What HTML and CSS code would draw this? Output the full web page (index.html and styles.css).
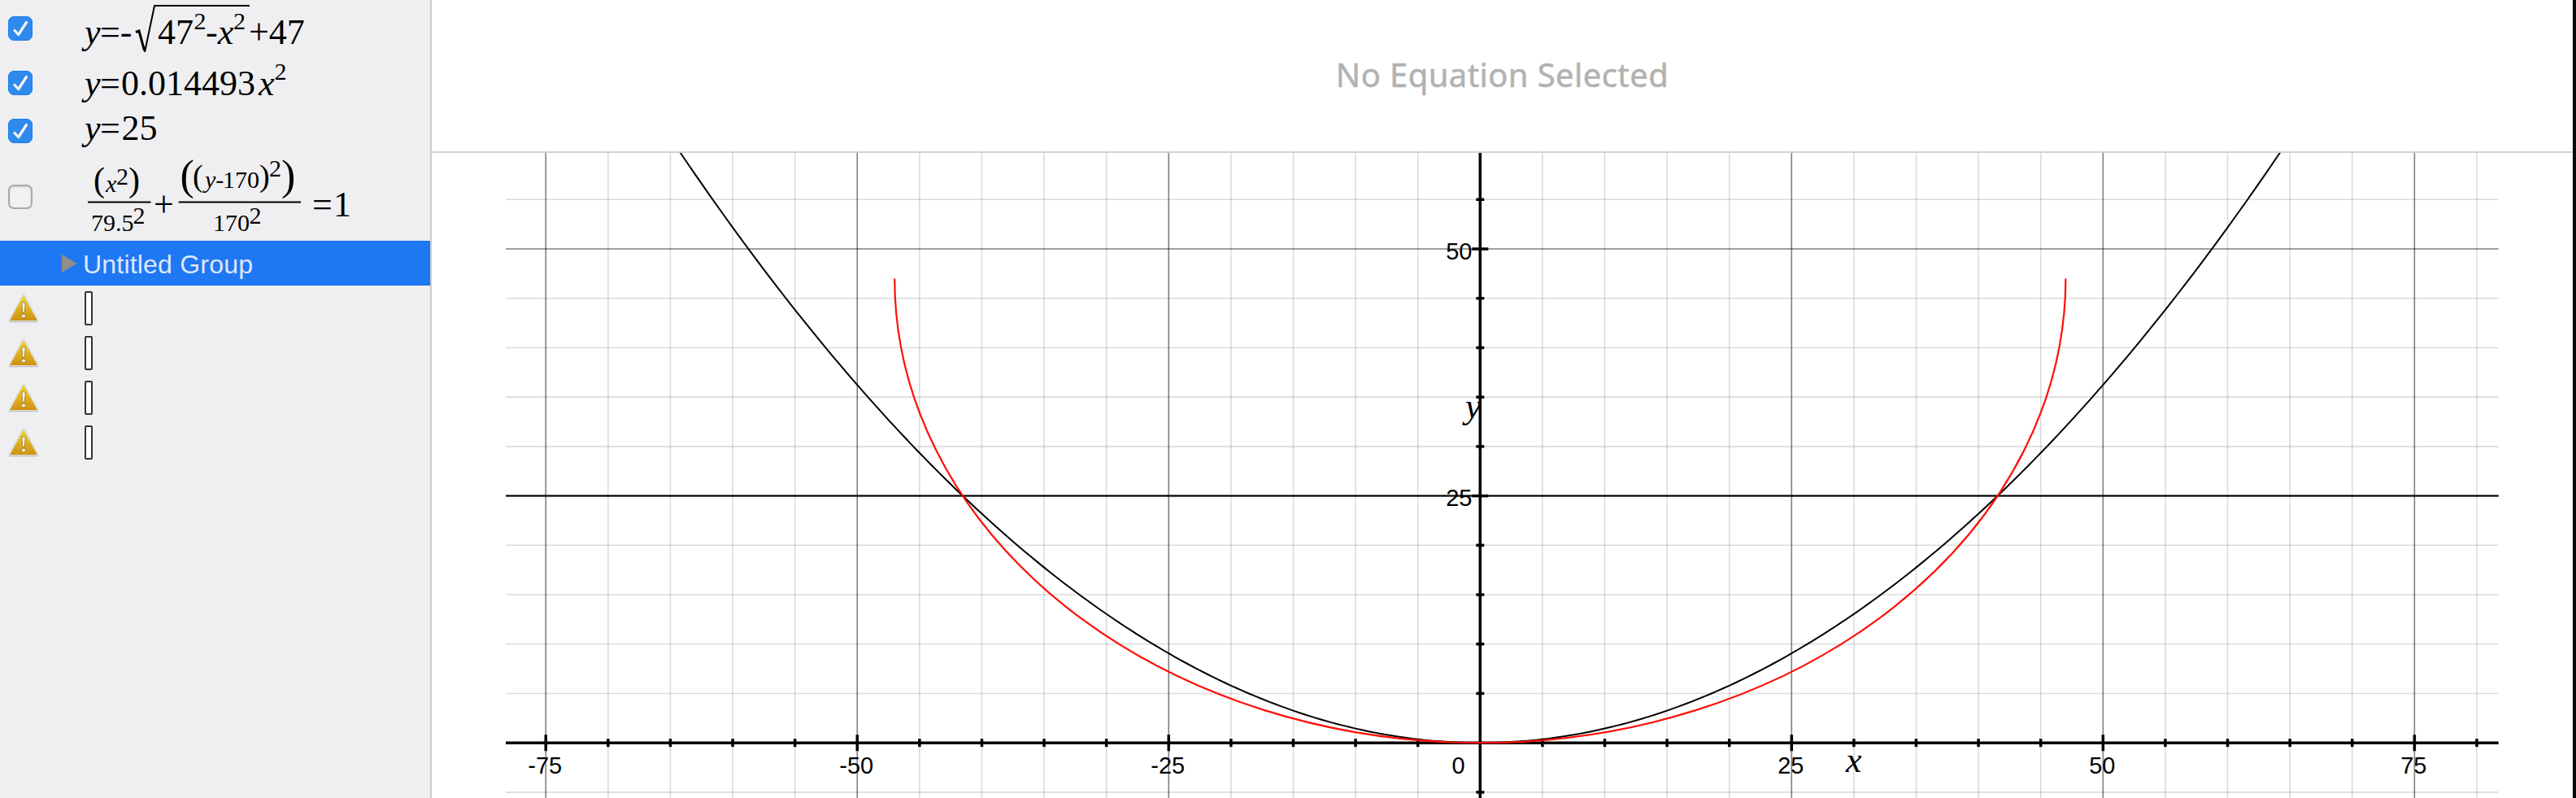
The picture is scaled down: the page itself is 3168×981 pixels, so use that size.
FILE: index.html
```html
<!DOCTYPE html>
<html lang="en">
<head>
  <meta charset="UTF-8" />
  <meta name="viewport" content="width=device-width, initial-scale=1.0"/>
  <title>Grapher</title>
  <link rel="stylesheet" href="styles.css">
</head>
<body>
  <!-- shared icons -->
  <svg class="defs" width="0" height="0">
    <defs>
      <linearGradient id="warnFill" x1="0" y1="0" x2="0" y2="1">
        <stop offset="0" stop-color="#f0d32e" />
        <stop offset="1" stop-color="#cf9312" />
      </linearGradient>
      <symbol id="tick" viewBox="0 0 30 30">
        <path d="M8 17.500 L12.700 22.500 L22.500 7.500" fill="none" stroke="#f4f4f4" stroke-width="3.200" stroke-linecap="round" stroke-linejoin="round" />
      </symbol>
      <symbol id="warning" viewBox="0 0 38 38">
        <path d="M19 3.500 L35.500 34.500 H2.500 Z" fill="#b9b9bb" stroke="#b9b9bb" stroke-width="3.500" stroke-linejoin="round" />
        <path d="M19 3 L35.500 33.500 H2.500 Z" fill="#dededf" stroke="#dededf" stroke-width="3.500" stroke-linejoin="round" />
        <path d="M19 4 L35 33.500 H3 Z" fill="url(#warnFill)" stroke="url(#warnFill)" stroke-width="1" stroke-linejoin="round" />
        <path d="M16.600 12.500 Q19 10.500 21.400 12.500 L20.200 24.500 H17.800 Z" fill="#f2eee2" stroke="#a8842a" stroke-width="1" />
        <circle cx="19" cy="28.500" r="2.500" fill="#f2eee2" stroke="#a8842a" stroke-width="1" />
      </symbol>
    </defs>
  </svg>

  <div class="app">
    <aside class="sidebar">
      <div class="row row-root">
        <span class="check on"><svg><use href="#tick" /></svg></span>
        <svg class="math" width="300" height="70">
          <text x="4" y="53.500"><tspan class="var">y</tspan></text>
          <text x="23" y="53.500">=-</text>
          <path class="root" d="M67 39.500 L71 38 L77.500 62" />
          <path class="rule" d="M78 64 L90 7 H207" />
          <text x="94" y="53.500">47</text>
          <text class="small" x="138.500" y="35.700">2</text>
          <text x="153" y="53.500">-<tspan class="var">x</tspan></text>
          <text class="small" x="187" y="35.700">2</text>
          <text x="206" y="53.500">+47</text>
        </svg>
      </div>
      <div class="row row-parabola">
        <span class="check on"><svg><use href="#tick" /></svg></span>
        <svg class="math" width="300" height="64">
          <text x="4" y="46.500"><tspan class="var">y</tspan></text>
          <text x="23" y="46.500">=</text>
          <text x="49" y="46.500">0.014493</text>
          <text x="218" y="46.500"><tspan class="var">x</tspan></text>
          <text class="small" x="237.500" y="28.300">2</text>
        </svg>
      </div>
      <div class="row row-line">
        <span class="check on"><svg><use href="#tick" /></svg></span>
        <svg class="math" width="300" height="53">
          <text x="4" y="38"><tspan class="var">y</tspan></text>
          <text x="23" y="38">=</text>
          <text x="49.500" y="38">25</text>
        </svg>
      </div>
      <div class="row row-ellipse">
        <span class="check"></span>
        <svg class="math" width="340" height="109">
          <text class="paren" x="15" y="48">(</text>
          <text class="small" x="30" y="49"><tspan class="var">x</tspan></text>
          <text class="small" x="43" y="40">2</text>
          <text class="paren" x="58" y="48">)</text>
          <path class="rule" d="M8 61.500 H85.500" />
          <text class="small" x="12" y="97">79.5</text>
          <text class="small" x="63.500" y="88">2</text>
          <text x="89" y="78.700">+</text>
          <text class="paren-big" x="121.500" y="45.500">(</text>
          <text class="paren-mid" x="137" y="42">(</text>
          <text class="small" x="152" y="43.700"><tspan class="var">y</tspan>-</text>
          <text class="small" x="174" y="43.700">170</text>
          <text class="paren-mid" x="219" y="42">)</text>
          <text class="small" x="231" y="29.700">2</text>
          <text class="paren-big" x="246" y="45.500">)</text>
          <path class="rule" d="M119.700 61.500 H270" />
          <text class="small" x="162" y="97">170</text>
          <text class="small" x="206.500" y="88">2</text>
          <text x="284" y="78.700">=</text>
          <text x="310" y="78.700">1</text>
        </svg>
      </div>
      <div class="row group">
        <span class="arrow"></span>
        <span class="group-name">Untitled Group</span>
      </div>
      <div class="row empty"><svg class="warn"><use href="#warning" /></svg><span class="slot"></span></div>
      <div class="row empty"><svg class="warn"><use href="#warning" /></svg><span class="slot"></span></div>
      <div class="row empty"><svg class="warn"><use href="#warning" /></svg><span class="slot"></span></div>
      <div class="row empty"><svg class="warn"><use href="#warning" /></svg><span class="slot"></span></div>
    </aside>

    <main class="main">
      <header class="editor"><span class="hint">No Equation Selected</span></header>
      <svg id="graph" class="graph" width="2633" height="793" viewBox="531 188 2633 793"></svg>
    </main>
  </div>

  <script src="script.js"></script>
</body>
</html>
```

FILE: styles.css
```css
body {
  margin: 0;
  background: #fff;
  font-family: "Liberation Sans", Arial, sans-serif;
  overflow: hidden;
}

.defs {
  position: absolute;
}

.app {
  display: flex;
  width: 3168px;
  height: 981px;
  box-sizing: border-box;
  border-right: 4px solid #03080c;
}

.sidebar {
  width: 529px;
  flex: none;
  background: #efeff1;
  border-right: 2px solid #cbcbcc;
}

.row {
  display: flex;
  align-items: center;
  box-sizing: border-box;
  padding-left: 10px;
}

.row-root {
  height: 70px;
}

.row-parabola {
  height: 64px;
}

.row-line {
  height: 53px;
}

.row-ellipse {
  height: 109px;
}

.check {
  width: 30px;
  height: 30px;
  box-sizing: border-box;
  border: 2px solid #a9a9ab;
  border-radius: 7px;
  background: #f1f1f1;
  box-shadow: inset 0 1px 2px rgba(0, 0, 0, 0.15);
}

.check.on {
  border: 1px solid #1b7df0;
  background: #2f8aee;
  box-shadow: none;
}

.check svg {
  display: block;
  width: 30px;
  height: 30px;
  margin: -1px;
}

.math {
  margin-left: 60px;
  font-family: "Liberation Serif", "Times New Roman", serif;
  font-size: 44px;
  fill: #000;
}

.math .var {
  font-style: italic;
}

.math .small {
  font-size: 30px;
}

.math .paren {
  font-size: 42px;
}

.math .paren-mid {
  font-size: 38px;
}

.math .paren-big {
  font-size: 52px;
}

.rule {
  fill: none;
  stroke: #000;
  stroke-width: 2;
}

.root {
  fill: none;
  stroke: #000;
  stroke-width: 3;
}

.group {
  height: 55px;
  padding-left: 76px;
  background: #1e78f3;
  border-top: 1px solid #0f6af0;
  border-bottom: 1px solid #0f6af0;
}

.arrow {
  border-left: 19px solid #8e8e8e;
  border-top: 11px solid transparent;
  border-bottom: 11px solid transparent;
}

.group-name {
  margin-left: 7px;
  padding-top: 4px;
  color: #dfe6fb;
  font-size: 32px;
  letter-spacing: 0.2px;
}

.empty {
  height: 55px;
}

.warn {
  width: 38px;
  height: 38px;
}

.slot {
  width: 10px;
  height: 42px;
  margin-left: 56px;
  box-sizing: border-box;
  border: 2px solid #333;
  border-radius: 2px;
  background: #fff;
}

.main {
  flex: 1;
  display: flex;
  flex-direction: column;
}

.editor {
  height: 186px;
  display: flex;
  justify-content: center;
  align-items: center;
  border-bottom: 2px solid #d2d2d2;
}

.hint {
  padding-bottom: 3px;
  color: #b2b2b2;
  font-family: "Noto Sans", "Open Sans", sans-serif;
  font-size: 40px;
  letter-spacing: 0.4px;
  -webkit-text-stroke: 0.5px #b2b2b2;
}

.graph {
  display: block;
}

.grid-minor {
  stroke: #000;
  stroke-opacity: 0.14;
  stroke-width: 1.6;
}

.grid-major {
  stroke: #000;
  stroke-opacity: 0.5;
  stroke-width: 1.6;
}

.axis {
  stroke: #000;
  stroke-width: 3.5;
}

.curve {
  fill: none;
  stroke: #000;
  stroke-width: 2;
}

.curve.red {
  stroke: #fe0f06;
  stroke-width: 2.2;
}

.label {
  font-family: "Liberation Sans", Arial, sans-serif;
  font-size: 29px;
}

.axis-name {
  font-family: "Liberation Serif", "Times New Roman", serif;
  font-style: italic;
  font-size: 44px;
}
```

FILE: script.js
```js
const graph = document.getElementById('graph');

// origin and scale, in pixels
const X0 = 1820.3;
const Y0 = 913.2;
const UX = 15.321;
const UY = 12.144;
const LEFT = 622;
const RIGHT = 3072.7;
const TOP = 188;
const BOTTOM = 981;

const px = x => X0 + x * UX;
const py = y => Y0 - y * UY;

let out = '';

function line(cls, x1, y1, x2, y2) {
  out += `<line class="${cls}" x1="${x1}" y1="${y1}" x2="${x2}" y2="${y2}" />`;
}

function text(cls, x, y, anchor, str) {
  out += `<text class="${cls}" x="${x}" y="${y}" text-anchor="${anchor}">${str}</text>`;
}

function curve(cls, fn, from, to, step) {
  const points = [];
  for (let x = from; x <= to + 0.0001; x += step) {
    points.push(px(x).toFixed(2) + ',' + py(fn(x)).toFixed(2));
  }
  out += `<polyline class="${cls}" points="${points.join(' ')}" />`;
}

// grid
for (let x = -75; x <= 80; x += 5) {
  if (x !== 0) line(x % 25 ? 'grid-minor' : 'grid-major', px(x), TOP, px(x), BOTTOM);
}
for (let y = -5; y <= 55; y += 5) {
  if (y !== 0) line(y % 25 ? 'grid-minor' : 'grid-major', LEFT, py(y), RIGHT, py(y));
}

// axes and ticks
line('axis', LEFT, Y0, RIGHT, Y0);
line('axis', X0, TOP, X0, BOTTOM);
for (let x = -75; x <= 80; x += 5) {
  const h = x % 25 ? 5 : 10;
  if (x !== 0) line('axis', px(x), Y0 - h, px(x), Y0 + h);
}
for (let y = -5; y <= 55; y += 5) {
  const w = y % 25 ? 5 : 10;
  if (y !== 0) line('axis', X0 - w, py(y), X0 + w, py(y));
}

// labels
[-75, -50, -25].forEach(n => text('label', px(n) - 1, 950.5, 'middle', n));
[25, 50, 75].forEach(n => text('label', px(n) - 1, 950.5, 'middle', n));
text('label', 1793.5, 950.5, 'middle', '0');
text('label', 1810.5, 318.5, 'end', '50');
text('label', 1810.5, 622, 'end', '25');
text('axis-name', 2270, 949, 'start', 'x');
text('axis-name', 1802, 514, 'start', 'y');

// equations
line('curve', LEFT, py(25), RIGHT, py(25));
curve('curve', x => 0.014493 * x * x, -66, 66, 0.5);

const rx = 47 * UX;
const ry = 47 * UY;
out += `<path class="curve red" d="M${px(-47)} ${py(47)} A${rx} ${ry} 0 0 0 ${px(47)} ${py(47)}" />`;

graph.innerHTML = out;
```
